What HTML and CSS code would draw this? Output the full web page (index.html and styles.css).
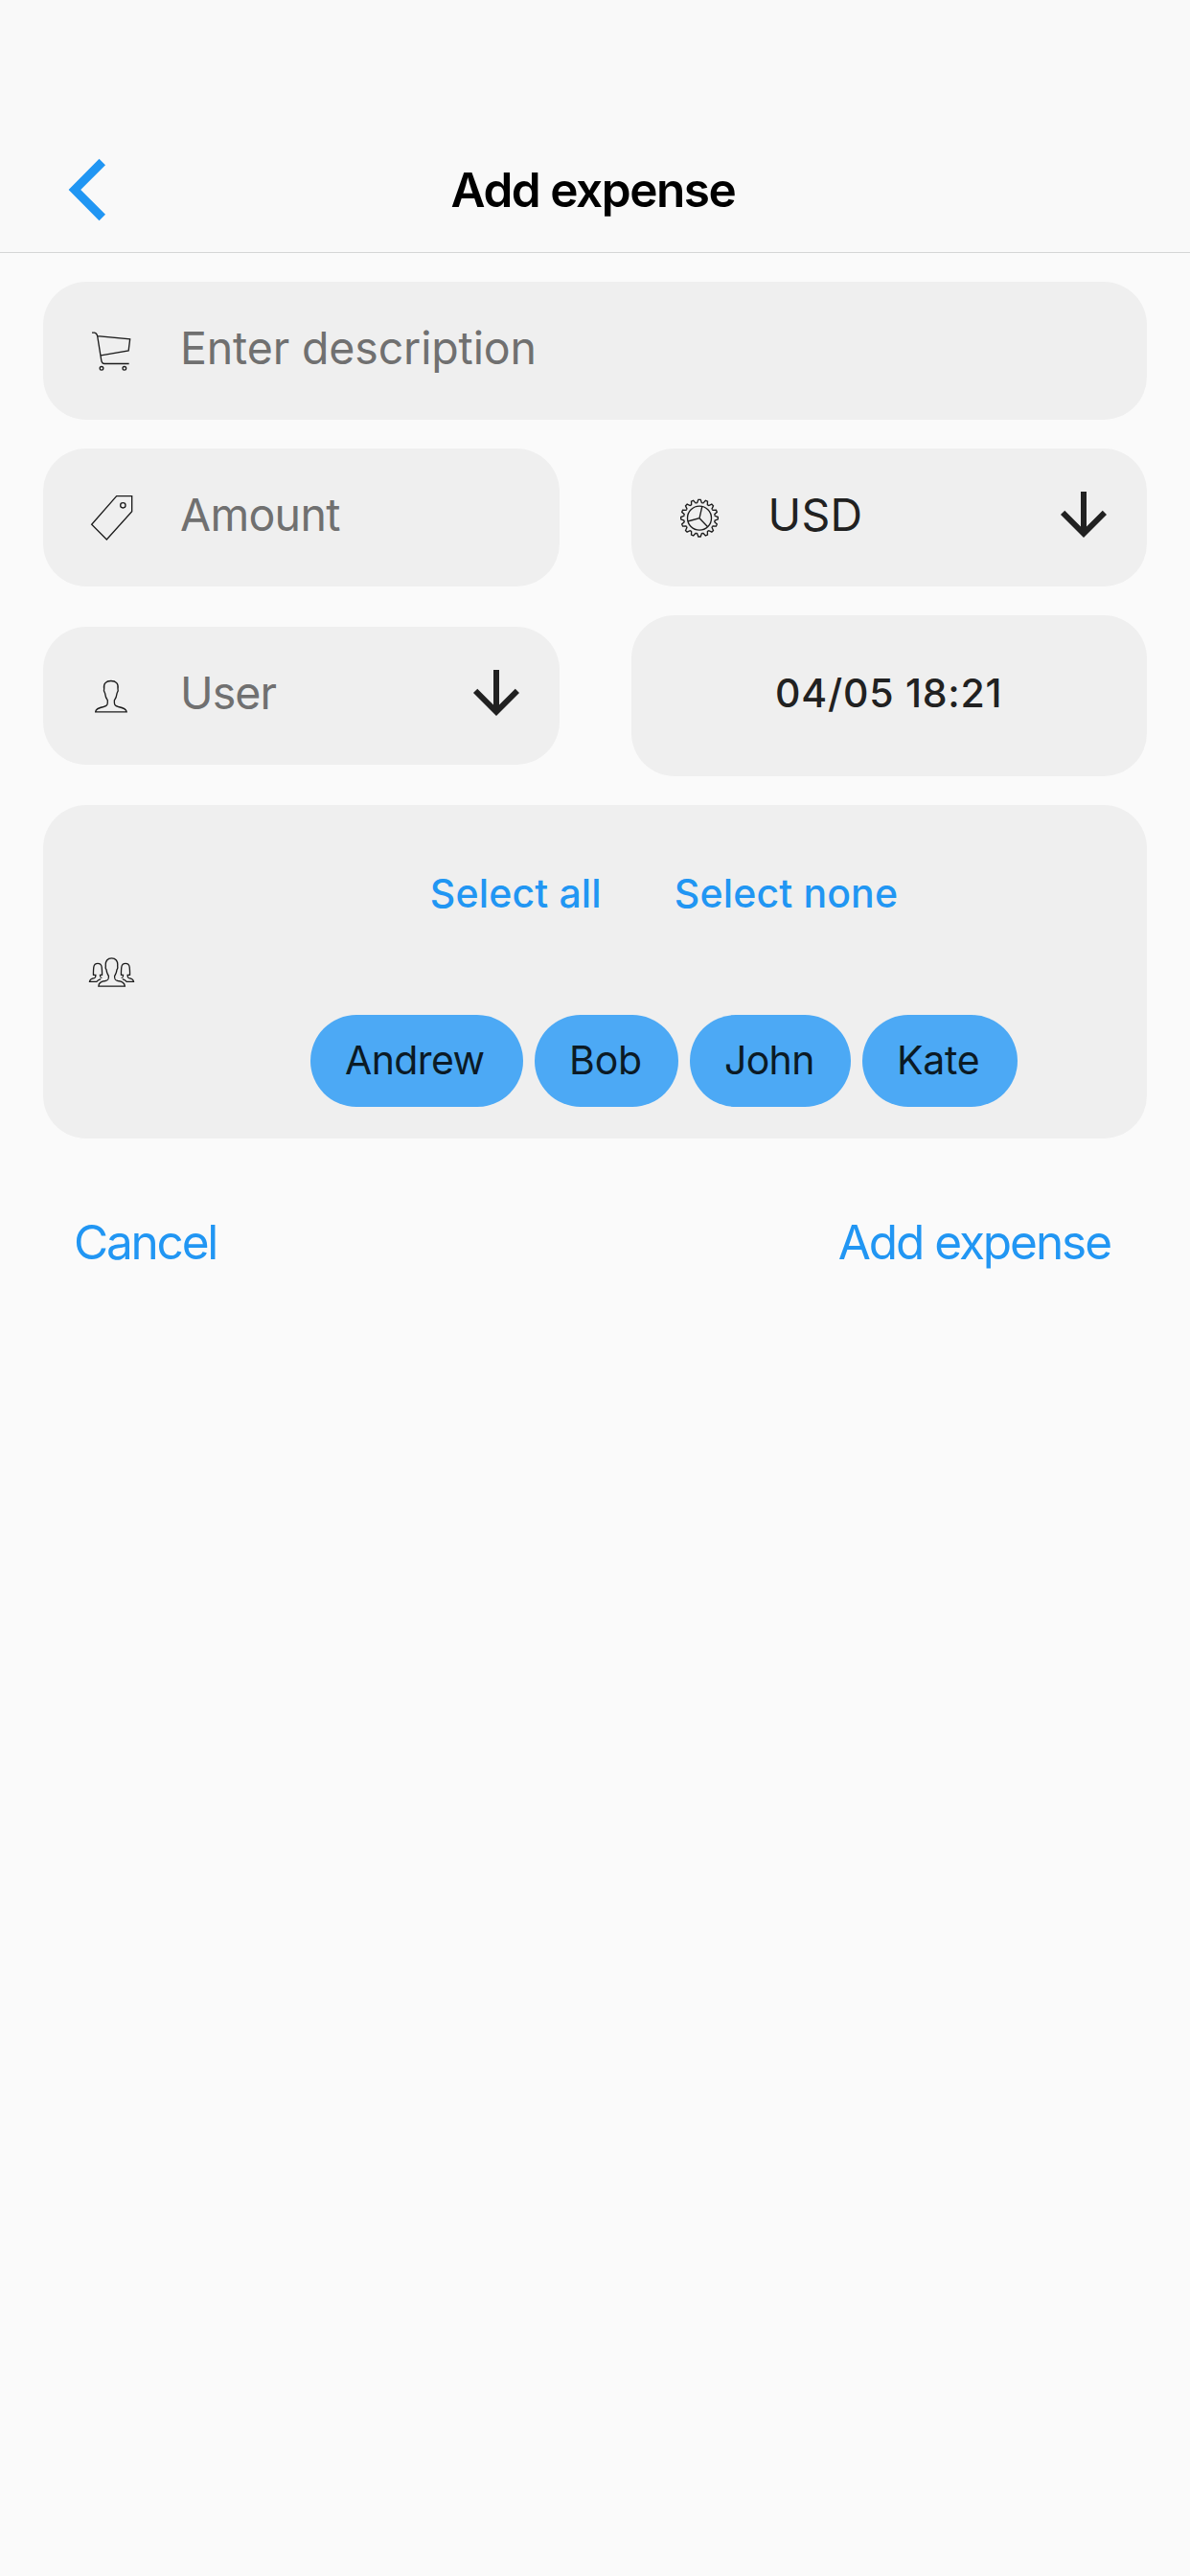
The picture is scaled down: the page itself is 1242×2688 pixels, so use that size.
FILE: index.html
```html
<!DOCTYPE html>
<html lang="en">
<head>
<meta charset="utf-8">
<title>Add expense</title>
<link rel="stylesheet" href="styles.css">
</head>
<body>
<header class="navbar">
  <a class="back" aria-label="Back">
    <svg width="40" height="66" viewBox="0 0 40 66"><path d="M32.5 .8 39 7.3 13.2 33 39 58.7 32.5 65.2.6 33z" fill="#2196f3"/></svg>
  </a>
  <h1 class="title">Add expense</h1>
</header>

<main class="form">
  <div class="field">
    <svg class="icon" viewBox="0 3 210 210">
      <path d="M48 51.500h8q7 1 9 10.500l102 9.500-4.500 36L76 122.500M65 62l12.500 77q2 9.500 9 9.500H164"/>
      <circle cx="78" cy="163" r="5.500"/><circle cx="149.500" cy="163" r="5.500"/>
    </svg>
    <span class="label">Enter description</span>
  </div>

  <div class="row">
    <div class="field">
      <svg class="icon" viewBox="0 0 210 210">
        <path d="M125 38h48v48l-79 88-47-47z"/><circle cx="145" cy="67" r="8"/>
      </svg>
      <span class="label label-amount">Amount</span>
    </div>
    <div class="field">
      <svg class="icon" viewBox="0 0 210 210">
        <defs><path id="tooth" d="M95.400 59.600 98 58.500l3.500-9.500h7l3.500 9.500 2.600 1.100"/></defs>
        <use href="#tooth"/>
        <use href="#tooth" transform="rotate(22.500 105 107)"/>
        <use href="#tooth" transform="rotate(45 105 107)"/>
        <use href="#tooth" transform="rotate(67.500 105 107)"/>
        <use href="#tooth" transform="rotate(90 105 107)"/>
        <use href="#tooth" transform="rotate(112.500 105 107)"/>
        <use href="#tooth" transform="rotate(135 105 107)"/>
        <use href="#tooth" transform="rotate(157.500 105 107)"/>
        <use href="#tooth" transform="rotate(180 105 107)"/>
        <use href="#tooth" transform="rotate(202.500 105 107)"/>
        <use href="#tooth" transform="rotate(225 105 107)"/>
        <use href="#tooth" transform="rotate(247.500 105 107)"/>
        <use href="#tooth" transform="rotate(270 105 107)"/>
        <use href="#tooth" transform="rotate(292.500 105 107)"/>
        <use href="#tooth" transform="rotate(315 105 107)"/>
        <use href="#tooth" transform="rotate(337.500 105 107)"/>
        <circle cx="105" cy="107" r="37.500"/>
        <path d="m113.500 70-8.500 37-36.500 10M105 107l26 27"/>
      </svg>
      <span class="label label-value">USD</span>
      <svg class="arrow" viewBox="0 0 24 24"><path d="M20 12l-1.410-1.410L13 16.170V4h-2v12.170l-5.580-5.590L4 12l8 8 8-8z"/></svg>
    </div>
  </div>

  <div class="row">
    <div class="field">
      <svg class="icon" viewBox="0 3 210 210">
        <path d="M59 158.500h97.500c-1-9-11-13-26-16-11-2.500-13-5-12.500-20 5-7 7.500-14 8.500-23 4-5 4-9 2.500-13 3-16-6-25-21.500-25S83 70.500 86 86.500c-1.500 4-1.500 8 2.500 13 1 9 3.500 16 8.500 23 .5 15-1.500 17.500-12.500 20-15 3-25 7-25.500 16z"/>
      </svg>
      <span class="label label-user">User</span>
      <svg class="arrow" viewBox="0 0 24 24"><path d="M20 12l-1.410-1.410L13 16.170V4h-2v12.170l-5.580-5.590L4 12l8 8 8-8z"/></svg>
    </div>
    <div class="field field-date"><span class="date">04/05 18:21</span></div>
  </div>

  <section class="field members">
    <svg class="icon" viewBox="0 -3 210 210">
      <path d="M68.500 147.500h82.500c-1-11-10-16-22-17-9-1.500-11-5-10-16 4-5 6-11 7-19 3-4 3-7 2-11 2-16-6-25-18.500-25S89 68.500 91 84.500c-1 4-1 7 2 11 1 8 3 14 7 19 1 11-1 14.500-10 16-12 1-21 6-21.500 17z"/>
      <path id="side" d="M79 121c-6-1-6-3-5.500-9h6c.5-9 0-16-1-25-1-7-5-11-12.500-11s-11.500 4-12.500 11c-1 9-1.500 16-1 25h7c.5 6 .5 9-4 10-9 1.500-14 3-15 11h22c4-5 8-6.500 13-8"/>
      <use href="#side" transform="matrix(-1 0 0 1 219 0)"/>
    </svg>
    <div class="picker">
      <div class="bulk"><a>Select all</a><a>Select none</a></div>
      <div class="chips">
        <span class="chip chip-andrew">Andrew</span>
        <span class="chip chip-bob">Bob</span>
        <span class="chip chip-john">John</span>
        <span class="chip chip-kate">Kate</span>
      </div>
    </div>
  </section>
</main>

<footer class="actions"><a class="cancel">Cancel</a><a class="submit">Add expense</a></footer>
</body>
</html>
```
FILE: styles.css
```css
* { box-sizing: border-box; }

body {
  margin: 0;
  min-height: 2688px;
  background: #fafafa;
  color: #212121;
  font-family: Inter, "Liberation Sans", sans-serif;
}

svg { display: block; flex: none; }

.navbar {
  display: grid;
  grid-template-columns: 1fr auto 1fr;
  align-items: center;
  height: 264px;
  padding: 132px 75px 0 71px;
  background: #f9f9f9;
  border-bottom: 1px solid #d5d6d6;
}

.title {
  margin: 0;
  color: #000;
  font-size: 49.5px;
  font-weight: 600;
  line-height: 60px;
  letter-spacing: -1.45px;
}

.form {
  display: flex;
  flex-direction: column;
  gap: 30px;
  padding: 30px 45px 0;
}

.row {
  display: grid;
  grid-template-columns: 1fr 1fr;
  gap: 75px;
  align-items: center;
}

.field {
  display: flex;
  align-items: center;
  height: 144px;
  border-radius: 45px;
  background: #efefef;
}

.icon {
  width: 70px;
  height: 70px;
  margin: 0 38px 0 35px;
  fill: none;
  stroke: #1c1c1c;
  stroke-width: 4;
}

.row .field:nth-child(2) .icon { margin: 0 37px 0 36px; }

.label {
  flex: 1;
  padding-bottom: 6px;
  color: #707070;
  font-size: 46.5px;
  line-height: 60px;
  letter-spacing: -.15px;
}
.label-amount { letter-spacing: -.7px; }
.label-user { letter-spacing: -.9px; }
.label-value { color: #212121; letter-spacing: .3px; }

.arrow {
  width: 72px;
  height: 72px;
  margin: 0 30px 6px 0;
  fill: #212121;
}

.field-date {
  height: 168px;
  justify-content: center;
  padding-bottom: 7px;
}
.date {
  font-size: 41px;
  font-weight: 500;
  letter-spacing: .77px;
}

.members { height: 348px; }
.members .icon { margin-right: 39px; }

.picker {
  flex: 1;
  display: flex;
  flex-direction: column;
  align-items: center;
  align-self: stretch;
  gap: 79px;
  padding-top: 44px;
}

.bulk {
  display: flex;
  gap: 76px;
  color: #2196f3;
  font-size: 41px;
  font-weight: 500;
  line-height: 96px;
  letter-spacing: .15px;
}

.chips { display: flex; gap: 12px; }
.chip {
  height: 96px;
  padding-left: 36px;
  border-radius: 48px;
  background: #4ca9f5;
  color: #0b1a25;
  font-size: 41px;
  line-height: 94px;
}
.chip-andrew { width: 222px; letter-spacing: -.6px; }
.chip-bob { width: 150px; letter-spacing: -.2px; }
.chip-john { width: 168px; letter-spacing: -.7px; }
.chip-kate { width: 162px; letter-spacing: -.3px; }

.actions {
  display: flex;
  justify-content: space-between;
  padding: 78px 83px 0 77px;
  color: #2196f3;
  font-size: 49.5px;
  line-height: 60px;
}
.cancel { letter-spacing: -2.2px; }
.submit { letter-spacing: -2.05px; }
```
